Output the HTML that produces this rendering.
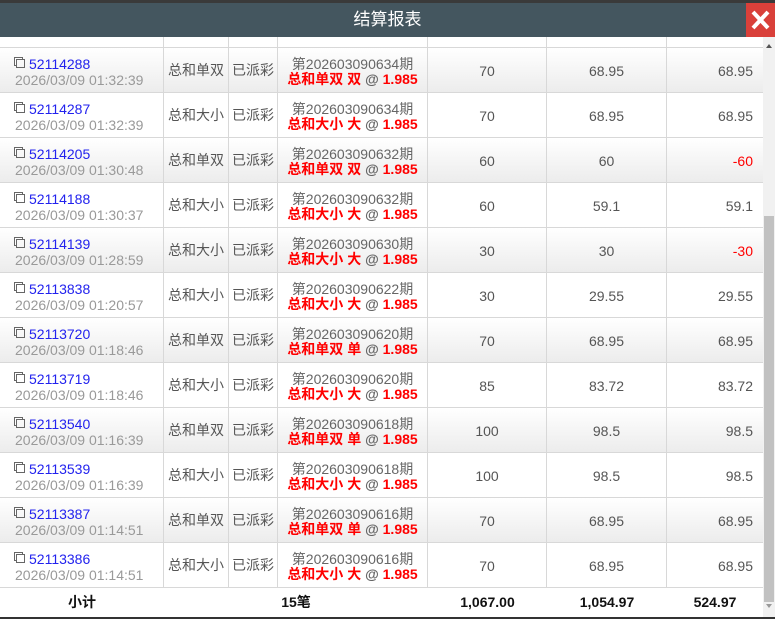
<!DOCTYPE html>
<html><head><meta charset="utf-8"><style>
*{margin:0;padding:0;box-sizing:border-box}
body{width:775px;height:619px;overflow:hidden;background:#fff;font-family:"Liberation Sans","Noto Sans CJK SC",sans-serif;position:relative}
.top{position:absolute;left:0;top:0;width:775px;height:3px;background:#3a3a3a}
.hdr{position:absolute;left:0;top:3px;width:775px;height:34px;background:#44565f;color:#fff;font-size:17px;text-align:center;line-height:34px}
.close{position:absolute;left:746px;top:3px;width:29px;height:34px;background:#d9403a}
.row{position:absolute;left:0;width:763px;height:45px;border-bottom:1px solid #d8d8d8}
.g{background:linear-gradient(#fff,#ececec)}
.c{position:absolute;top:0;height:100%;border-right:1px solid #d8d8d8;color:#555;font-size:14px}
.t{display:flex;align-items:center;justify-content:center}
.id{position:absolute;left:16px;top:8px;font-size:14px;line-height:16px;color:#22e}
.id i{display:inline-block;width:9px;height:9px;border:1px solid #666;margin-right:4px;position:relative;top:-1px;box-shadow:-2px -2px 0 -1px #fff,-2px -2px 0 0 #666}
.dt{position:absolute;left:15px;top:24px;font-size:14px;color:#999;line-height:16px}
.iss{text-align:center;font-size:14px;line-height:15px;padding-top:9px;color:#666}
.iss b{color:#f00;font-weight:bold}
.iss span{color:#666}
.n{text-align:right;padding-right:10px;line-height:46px}
.red{color:#f00}
.sb{position:absolute;left:763px;top:37px;width:12px;height:580px;background:#f1f1f1}
.th{position:absolute;left:764px;top:216px;width:10px;height:386px;background:#c1c1c1}
.tot{position:absolute;top:588px;left:0;width:763px;height:29px;font-weight:bold;font-size:14px;color:#111;background:#fff}
.tot div{position:absolute;top:0;line-height:29px;text-align:center}
.bot{position:absolute;left:0;top:617px;width:775px;height:2px;background:#333}
</style></head><body>
<div class="top"></div>
<div class="row" style="top:37px;height:11px"><div class="c" style="left:0;width:164px"></div><div class="c" style="left:164px;width:65px"></div><div class="c" style="left:229px;width:49px"></div><div class="c" style="left:278px;width:150px"></div><div class="c" style="left:428px;width:119px"></div><div class="c" style="left:547px;width:120px"></div></div>
<div id="rows"></div>
<div class="tot">
<div style="left:0;width:164px">小计</div>
<div style="left:228px;width:136px">15笔</div>
<div style="left:428px;width:119px">1,067.00</div>
<div style="left:547px;width:120px">1,054.97</div>
<div style="left:667px;width:96px">524.97</div>
</div>
<div class="hdr">结算报表</div>
<div class="close"><svg width="29" height="34"><path d="M7 9L22 25M22 9L7 25" stroke="#fff" stroke-width="4"/></svg></div>
<div class="sb"><svg width="12" height="580"><path d="M3 11h6l-3-4z" fill="#555"/><path d="M3 567h6l-3 4z" fill="#999"/></svg></div>
<div class="th"></div>
<div class="bot"></div>
<script>
var d=[["52114288","01:32:39","总和单双","0634","总和单双 双","70","68.95","68.95"],
["52114287","01:32:39","总和大小","0634","总和大小 大","70","68.95","68.95"],
["52114205","01:30:48","总和单双","0632","总和单双 双","60","60","-60"],
["52114188","01:30:37","总和大小","0632","总和大小 大","60","59.1","59.1"],
["52114139","01:28:59","总和大小","0630","总和大小 大","30","30","-30"],
["52113838","01:20:57","总和大小","0622","总和大小 大","30","29.55","29.55"],
["52113720","01:18:46","总和单双","0620","总和单双 单","70","68.95","68.95"],
["52113719","01:18:46","总和大小","0620","总和大小 大","85","83.72","83.72"],
["52113540","01:16:39","总和单双","0618","总和单双 单","100","98.5","98.5"],
["52113539","01:16:39","总和大小","0618","总和大小 大","100","98.5","98.5"],
["52113387","01:14:51","总和单双","0616","总和单双 单","70","68.95","68.95"],
["52113386","01:14:51","总和大小","0616","总和大小 大","70","68.95","68.95"]];
var h="";d.forEach(function(r,i){h+='<div class="row'+(i%2==0?' g':'')+'" style="top:'+(48+i*45)+'px">'+
'<div class="c" style="left:0;width:164px"><div class="id"><i></i>'+r[0]+'</div><div class="dt">2026/03/09 '+r[1]+'</div></div>'+
'<div class="c t" style="left:164px;width:65px">'+r[2]+'</div>'+
'<div class="c t" style="left:229px;width:49px">已派彩</div>'+
'<div class="c iss" style="left:278px;width:150px">第20260309'+r[3]+'期<br><b>'+r[4]+' <span>@</span> 1.985</b></div>'+
'<div class="c" style="left:428px;width:119px;text-align:center;line-height:46px">'+r[5]+'</div>'+
'<div class="c" style="left:547px;width:120px;text-align:center;line-height:46px">'+r[6]+'</div>'+
'<div class="c n'+(r[7][0]=='-'?' red':'')+'" style="left:667px;width:96px;border-right:none">'+r[7]+'</div></div>';});
document.getElementById("rows").outerHTML=h;
</script>
</body></html>
